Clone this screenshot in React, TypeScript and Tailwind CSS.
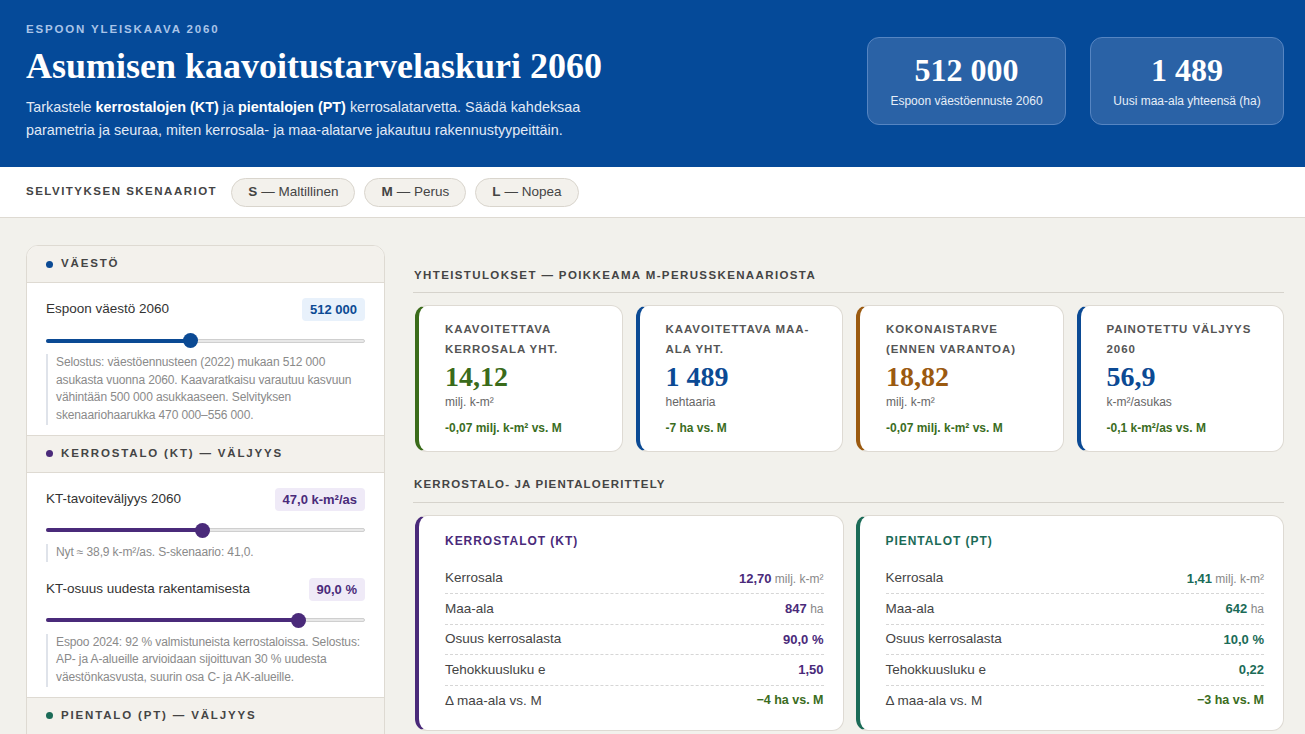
import React from "react";

const sans = { fontFamily: '"Liberation Sans", Arial, sans-serif' };
const serif = { fontFamily: '"Liberation Serif", "Times New Roman", serif' };

function Slider({ pct, color }: { pct: number; color: string }) {
  return (
    <div className="relative h-[15px] mt-[12px] flex items-center">
      <div className="w-full h-[4px] rounded-full bg-[#e8e8e8] border border-[#cfcfcf]" />
      <div className="absolute left-0 h-[4px] rounded-full" style={{ width: pct + "%", background: color }} />
      <div
        className="absolute w-[15px] h-[15px] rounded-full -ml-[7px]"
        style={{ left: pct + "%", background: color }}
      />
    </div>
  );
}

function Param({
  label,
  value,
  badgeBg,
  badgeText,
  color,
  pct,
  note,
}: {
  label: string;
  value: string;
  badgeBg: string;
  badgeText: string;
  color: string;
  pct: number;
  note: React.ReactNode;
}) {
  return (
    <div>
      <div className="flex items-center justify-between">
        <span className="text-[13.5px] text-[#333]">{label}</span>
        <span className={`px-[8px] h-[23px] leading-[23px] rounded-[4px] text-[13px] font-bold ${badgeBg} ${badgeText}`}>
          {value}
        </span>
      </div>
      <Slider pct={pct} color={color} />
      <div className="mt-[6px] border-l-2 border-[#dfe3ea] pl-[8px] -mr-[4px] text-[12px] tracking-[-0.01em] leading-[17.7px] text-[#8a8a8a]">{note}</div>
    </div>
  );
}

function SectionHead({ dot, title }: { dot: string; title: string }) {
  return (
    <div className="h-[37px] bg-[#f3f1ec] border-b border-[#dedad2] flex items-center pl-[19px] gap-[8px]">
      <span className={`w-[7px] h-[7px] rounded-full ${dot}`} />
      <span className="text-[11.5px] font-bold tracking-[0.16em] text-[#444]">{title}</span>
    </div>
  );
}

function KPI({
  border,
  title,
  value,
  valueColor,
  unit,
  delta,
}: {
  border: string;
  title: React.ReactNode;
  value: string;
  valueColor: string;
  unit: string;
  delta: string;
}) {
  return (
    <div className={`bg-white rounded-[12px] border border-[#dedad3] border-l-4 ${border} h-[147px] pl-[26px] pr-[12px] pt-[14px]`}>
      <div className="text-[11.5px] font-bold tracking-[0.08em] leading-[19.5px] text-[#555] uppercase">{title}</div>
      <div className={`text-[28px] font-bold leading-[34px] mt-[1px] ${valueColor}`} style={serif}>
        {value}
      </div>
      <div className="text-[12px] text-[#666] leading-[16px]">{unit}</div>
      <div className="text-[12px] font-bold text-[#3b6d1e] mt-[9px]">{delta}</div>
    </div>
  );
}

function Row({ label, value, unit, valueColor, last, delta }: { label: string; value: string; unit?: string; valueColor: string; last?: boolean; delta?: boolean }) {
  return (
    <div className={`h-[30.5px] flex items-center justify-between ${last ? "" : "border-b border-dashed border-[#d6d6d6]"}`}>
      <span className="text-[13.5px] text-[#444]">{label}</span>
      <span className={`font-bold ${delta ? "text-[12.5px] text-[#3b6d1e]" : "text-[13px] " + valueColor}`}>
        {value}
        {unit && <span className="font-normal text-[12px] text-[#888]"> {unit}</span>}
      </span>
    </div>
  );
}

function TypeCard({ border, titleColor, title, rows, valueColor }: { border: string; titleColor: string; title: string; rows: { label: string; value: string; unit?: string; delta?: boolean }[]; valueColor: string }) {
  return (
    <div className={`bg-white rounded-[12px] border border-[#dedad3] border-l-4 ${border} pl-[26px] pr-[19px] pt-[16px] pb-[14px]`}>
      <div className={`text-[12px] font-bold tracking-[0.08em] ${titleColor} mb-[14px]`}>{title}</div>
      {rows.map((r, i) => (
        <Row key={i} {...r} valueColor={valueColor} last={i === rows.length - 1} />
      ))}
    </div>
  );
}

export default function App() {
  return (
    <div className="min-h-screen bg-[#f2f1ec]" style={sans}>
      {/* Header */}
      <header className="bg-[#054a99] h-[167px] flex justify-between pl-[26px] pr-[21px]">
        <div className="pt-[21px]">
          <div className="text-[11.5px] font-bold tracking-[0.16em] text-[#a9c4e8]">ESPOON YLEISKAAVA 2060</div>
          <h1 className="text-[36px] font-bold text-white leading-[40px] mt-[8px]" style={serif}>
            Asumisen kaavoitustarvelaskuri 2060
          </h1>
          <p className="text-[14.4px] leading-[23px] text-[#e1e9f5] mt-[10px] max-w-[600px]">
            Tarkastele <b className="text-white">kerrostalojen (KT)</b> ja <b className="text-white">pientalojen (PT)</b> kerrosalatarvetta. Säädä kahdeksaa parametria ja seuraa, miten kerrosala- ja maa-alatarve jakautuu rakennustyypeittäin.
          </p>
        </div>
        <div className="flex gap-[24px] pt-[37px]">
          <div className="w-[199px] h-[88px] rounded-[12px] bg-[#2a62a6] border border-[#5685c2] flex flex-col items-center justify-center">
            <div className="text-[32px] font-bold text-white leading-[34px]" style={serif}>512 000</div>
            <div className="text-[12px] text-[#e6eef8] mt-[5px]">Espoon väestöennuste 2060</div>
          </div>
          <div className="w-[194px] h-[88px] rounded-[12px] bg-[#2a62a6] border border-[#5685c2] flex flex-col items-center justify-center">
            <div className="text-[32px] font-bold text-white leading-[34px]" style={serif}>1 489</div>
            <div className="text-[12px] text-[#e6eef8] mt-[5px]">Uusi maa-ala yhteensä (ha)</div>
          </div>
        </div>
      </header>

      {/* Scenario bar */}
      <div className="h-[51px] bg-white border-b border-[#dedad2] flex items-center pl-[26px] gap-[14px]">
        <span className="text-[11.5px] font-bold tracking-[0.13em] text-[#444]">SELVITYKSEN SKENAARIOT</span>
        <div className="flex gap-[9px]">
          {[
            ["S", "Maltillinen"],
            ["M", "Perus"],
            ["L", "Nopea"],
          ].map(([a, b]) => (
            <span key={a} className="h-[29px] px-[16px] rounded-full bg-[#f3f1ec] border border-[#d9d5cd] flex items-center text-[13.5px] text-[#444]">
              <b className="mr-[4px]">{a}</b> — {b}
            </span>
          ))}
        </div>
      </div>

      {/* Main */}
      <div className="flex gap-[28px] pl-[26px] pr-[21px] pt-[27px]">
        {/* Left panel */}
        <aside className="w-[359px] shrink-0 bg-white rounded-[12px] border border-[#dedad2] overflow-hidden">
          <SectionHead dot="bg-[#0b4a94]" title="VÄESTÖ" />
          <div className="px-[19px] pt-[15px] pb-[10px]">
            <Param
              label="Espoon väestö 2060"
              value="512 000"
              badgeBg="bg-[#e8f1fb]"
              badgeText="text-[#0b4a94]"
              color="#0b4a94"
              pct={45}
              note="Selostus: väestöennusteen (2022) mukaan 512 000 asukasta vuonna 2060. Kaavaratkaisu varautuu kasvuun vähintään 500 000 asukkaaseen. Selvityksen skenaariohaarukka 470 000–556 000."
            />
          </div>
          <div className="border-t border-[#dedad2]">
            <SectionHead dot="bg-[#4a2a7a]" title="KERROSTALO (KT) — VÄLJYYS" />
          </div>
          <div className="px-[19px] pt-[15px] pb-[10px] flex flex-col gap-[16px]">
            <Param
              label="KT-tavoiteväljyys 2060"
              value="47,0 k-m²/as"
              badgeBg="bg-[#efeaf7]"
              badgeText="text-[#4a2a7a]"
              color="#4a2a7a"
              pct={49}
              note="Nyt ≈ 38,9 k-m²/as. S-skenaario: 41,0."
            />
            <Param
              label="KT-osuus uudesta rakentamisesta"
              value="90,0 %"
              badgeBg="bg-[#efeaf7]"
              badgeText="text-[#4a2a7a]"
              color="#4a2a7a"
              pct={79}
              note="Espoo 2024: 92 % valmistuneista kerrostaloissa. Selostus: AP- ja A-alueille arvioidaan sijoittuvan 30 % uudesta väestönkasvusta, suurin osa C- ja AK-alueille."
            />
          </div>
          <div className="border-t border-[#dedad2]">
            <SectionHead dot="bg-[#1b6b57]" title="PIENTALO (PT) — VÄLJYYS" />
          </div>
          <div className="px-[19px] pt-[15px] pb-[10px]">
            <Param
              label="PT-tavoiteväljyys 2060"
              value="62,0 k-m²/as"
              badgeBg="bg-[#e6f2ee]"
              badgeText="text-[#1b6b57]"
              color="#1b6b57"
              pct={50}
              note="Nyt ≈ 55 k-m²/as."
            />
          </div>
        </aside>

        {/* Right column */}
        <main className="flex-1 pt-[22px]">
          <div className="text-[11.5px] font-bold tracking-[0.12em] text-[#444] pb-[8px] border-b border-[#d6d3cc] pl-[1px]">
            YHTEISTULOKSET — POIKKEAMA M-PERUSSKENAARIOSTA
          </div>
          <div className="grid grid-cols-4 gap-[13px] mt-[12px] pl-[2px]">
            <KPI border="border-l-[#3a6b1a]" title={<>Kaavoitettava<br />kerrosala yht.</>} value="14,12" valueColor="text-[#3a6b1a]" unit="milj. k-m²" delta="-0,07 milj. k-m² vs. M" />
            <KPI border="border-l-[#0b4a94]" title={<>Kaavoitettava maa-<br />ala yht.</>} value="1 489" valueColor="text-[#0b4a94]" unit="hehtaaria" delta="-7 ha vs. M" />
            <KPI border="border-l-[#9b5a10]" title={<>Kokonaistarve<br />(ennen varantoa)</>} value="18,82" valueColor="text-[#9b5a10]" unit="milj. k-m²" delta="-0,07 milj. k-m² vs. M" />
            <KPI border="border-l-[#0b4a94]" title={<>Painotettu väljyys<br />2060</>} value="56,9" valueColor="text-[#0b4a94]" unit="k-m²/asukas" delta="-0,1 k-m²/as vs. M" />
          </div>

          <div className="text-[11.5px] font-bold tracking-[0.1em] text-[#444] pb-[8px] border-b border-[#d6d3cc] mt-[24px] pl-[1px]">
            KERROSTALO- JA PIENTALOERITTELY
          </div>
          <div className="grid grid-cols-2 gap-[12px] mt-[12px] pl-[2px]">
            <TypeCard
              border="border-l-[#4a2a7a]"
              titleColor="text-[#4a2a7a]"
              valueColor="text-[#4a2a7a]"
              title="KERROSTALOT (KT)"
              rows={[
                { label: "Kerrosala", value: "12,70", unit: "milj. k-m²" },
                { label: "Maa-ala", value: "847", unit: "ha" },
                { label: "Osuus kerrosalasta", value: "90,0 %" },
                { label: "Tehokkuusluku e", value: "1,50" },
                { label: "Δ maa-ala vs. M", value: "−4 ha vs. M", delta: true },
              ]}
            />
            <TypeCard
              border="border-l-[#1b6b57]"
              titleColor="text-[#1b6b57]"
              valueColor="text-[#1b6b57]"
              title="PIENTALOT (PT)"
              rows={[
                { label: "Kerrosala", value: "1,41", unit: "milj. k-m²" },
                { label: "Maa-ala", value: "642", unit: "ha" },
                { label: "Osuus kerrosalasta", value: "10,0 %" },
                { label: "Tehokkuusluku e", value: "0,22" },
                { label: "Δ maa-ala vs. M", value: "−3 ha vs. M", delta: true },
              ]}
            />
          </div>
        </main>
      </div>
    </div>
  );
}
